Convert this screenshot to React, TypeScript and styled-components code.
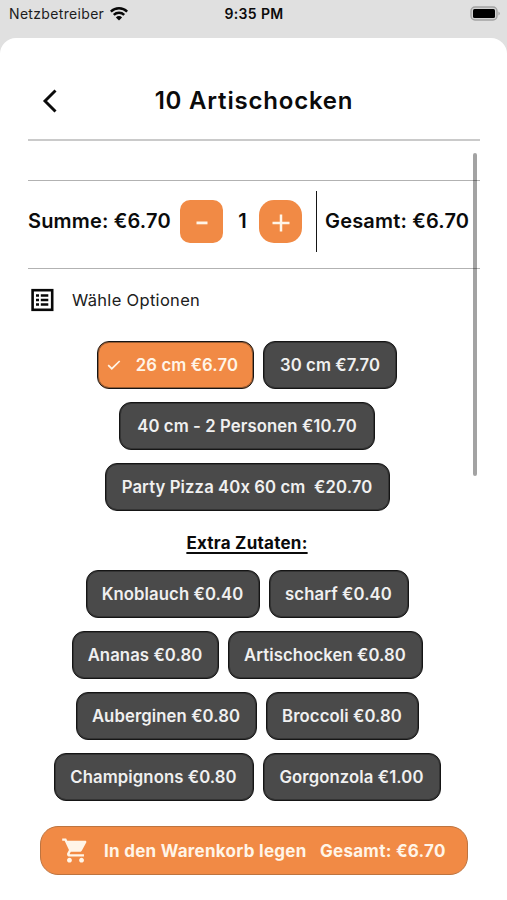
import React from "react";
import styled, { createGlobalStyle } from "styled-components";

const ORANGE = "#f18a45";

const GlobalStyle = createGlobalStyle`
  * { box-sizing: border-box; }
  body { margin: 0; background: #e0e0e0; font-family: Inter, "Liberation Sans", sans-serif; color: #0b0b0b; }
  button { font: inherit; color: inherit; margin: 0; padding: 0; border: 0; background: none; }
`;

const Screen = styled.div`
  width: 507px;
  height: 900px;
  display: flex;
  flex-direction: column;
  overflow: hidden;
  background: #e0e0e0;
`;

const StatusBar = styled.header`
  display: grid;
  grid-template-columns: 1fr auto 1fr;
  align-items: center;
  height: 38px;
  padding: 0 8px 11px 9px;
  font-size: 14px;
  line-height: 20px;
`;

const Carrier = styled.div`
  display: flex;
  align-items: center;
  gap: 6px;
  letter-spacing: 0.33px;
  color: #1c1c1c;
`;

const Clock = styled.div`
  font-weight: 600;
  letter-spacing: 0.35px;
`;

const Battery = styled.div`
  justify-self: end;
  display: flex;
  margin-right: -2px;
`;

const Sheet = styled.main`
  flex: 1;
  display: flex;
  flex-direction: column;
  background: #fff;
  border-radius: 16px 16px 0 0;
  padding: 0 27px 0 28px;
`;

const TitleBar = styled.div`
  display: grid;
  grid-template-columns: 44px 1fr 44px;
  align-items: center;
  height: 101px;
  padding-top: 25px;
`;

const BackButton = styled.button`
  display: flex;
  justify-content: center;
`;

const Title = styled.h1`
  margin: 0;
  font-size: 24px;
  line-height: 32px;
  font-weight: 600;
  letter-spacing: 0.8px;
  text-align: center;
`;

const Body = styled.section`
  position: relative;
  flex: none;
  height: 672px;
  border-top: 2px solid #cacaca;
`;

const ScrollThumb = styled.div`
  position: absolute;
  top: 12px;
  right: 3.5px;
  width: 4px;
  height: 323px;
  border-radius: 2px;
  background: rgba(0, 0, 0, 0.36);
`;

const SummaryRow = styled.div`
  display: flex;
  align-items: center;
  height: 89px;
  margin-top: 39px;
  padding-bottom: 7px;
  border: solid #b2b2b2;
  border-width: 1px 0;
  font-size: 20px;
  line-height: 28px;
  font-weight: 600;
  white-space: nowrap;
`;

const Sum = styled.span`
  width: 152px;
  letter-spacing: 0.18px;
`;

const StepButton = styled.button<{ $radius: number }>`
  display: flex;
  align-items: center;
  justify-content: center;
  width: 43px;
  height: 43px;
  padding-top: 4px;
  border-radius: ${(p) => p.$radius}px;
  background: ${ORANGE};
`;

const Quantity = styled.span`
  width: 36px;
  padding-left: 3px;
  text-align: center;
`;

const Divider = styled.span`
  width: 1px;
  height: 61px;
  margin: 0 8px 0 14px;
  background: #151515;
`;

const Total = styled.span`
  letter-spacing: 0.18px;
`;

const OptionsHeading = styled.h2`
  display: flex;
  align-items: center;
  gap: 16px;
  margin: 0 0 11px;
  height: 61px;
  font-size: 16.5px;
  font-weight: 400;
  letter-spacing: 0.31px;
  color: #202020;
`;

const ChipGroup = styled.div`
  display: flex;
  flex-direction: column;
  gap: 13px;
  width: 438px;
`;

const ChipRow = styled.div`
  display: flex;
  justify-content: center;
  gap: 9px;
`;

const Chip = styled.button<{ $width: number; $selected?: boolean }>`
  display: flex;
  align-items: center;
  justify-content: ${(p) => (p.$selected ? "space-between" : "center")};
  width: ${(p) => p.$width}px;
  height: 48px;
  padding: ${(p) => (p.$selected ? "0 15px 0 9px" : "0")};
  border: 1px solid #151515;
  border-radius: 12px;
  box-shadow: inset 0 0 0 1px rgba(20, 20, 20, 0.4);
  background: ${(p) => (p.$selected ? ORANGE : "#4a4a4a")};
  color: ${(p) => (p.$selected ? "#fff5e8" : "#f0f0f0")};
  font-size: 16.7px;
  font-weight: 600;
  letter-spacing: 0.1px;
  white-space: pre;
`;

const ExtrasHeading = styled.h3`
  width: 438px;
  height: 59px;
  margin: 0;
  padding-top: 20px;
  font-size: 17px;
  line-height: 25px;
  font-weight: 700;
  letter-spacing: 0.25px;
  text-align: center;
  text-decoration: underline;
  text-decoration-thickness: 1.5px;
  text-underline-offset: 3px;
`;

const CartButton = styled.button`
  display: flex;
  align-items: center;
  flex: none;
  width: 428px;
  height: 49px;
  margin: 15px 0 0 12px;
  padding: 0 20px;
  border: 1px solid #bd7440;
  border-radius: 18px;
  background: ${ORANGE};
  color: #fff5e8;
  font-size: 17px;
  font-weight: 700;
  letter-spacing: 0.27px;
  white-space: nowrap;
`;

const CartLabel = styled.span`
  width: 216px;
  margin-left: 14px;
  text-align: left;
`;

const CartTotal = styled.span``;

const SIZES = [
  [
    { label: "26 cm €6.70", width: 157, selected: true },
    { label: "30 cm €7.70", width: 134 },
  ],
  [{ label: "40 cm - 2 Personen €10.70", width: 256 }],
  [{ label: "Party Pizza 40x 60 cm  €20.70", width: 285 }],
];

const EXTRAS = [
  [
    { label: "Knoblauch €0.40", width: 174 },
    { label: "scharf €0.40", width: 140 },
  ],
  [
    { label: "Ananas €0.80", width: 147 },
    { label: "Artischocken €0.80", width: 195 },
  ],
  [
    { label: "Auberginen €0.80", width: 181 },
    { label: "Broccoli €0.80", width: 153 },
  ],
  [
    { label: "Champignons €0.80", width: 200 },
    { label: "Gorgonzola €1.00", width: 178 },
  ],
];

type ChipData = { label: string; width: number; selected?: boolean };

function Chips({ rows }: { rows: ChipData[][] }) {
  return (
    <ChipGroup>
      {rows.map((row, i) => (
        <ChipRow key={i}>
          {row.map((chip) => (
            <Chip key={chip.label} $width={chip.width} $selected={chip.selected}>
              {chip.selected && (
                <svg width="14" height="12" viewBox="0 0 14 12" fill="none" stroke="currentColor" strokeWidth="1.7">
                  <path d="M1.200 6.200 4.800 9.700 12.700 2" />
                </svg>
              )}
              <span>{chip.label}</span>
            </Chip>
          ))}
        </ChipRow>
      ))}
    </ChipGroup>
  );
}

export default function App() {
  return (
    <Screen>
      <GlobalStyle />
      <StatusBar>
        <Carrier>
          Netzbetreiber
          <svg width="18" height="14" viewBox="0 0 18 14" fill="none" stroke="#080808" strokeWidth="2.5">
            <path d="M.8 4.600a11.800 11.800 0 0 1 16.400 0" />
            <path d="M3.800 7.900a7.500 7.500 0 0 1 10.400 0" />
            <path d="M9 13.500 5.900 10.400a4.400 4.400 0 0 1 6.200 0Z" fill="#080808" stroke="none" />
          </svg>
        </Carrier>
        <Clock>9:35 PM</Clock>
        <Battery>
          <svg width="31" height="15" viewBox="0 0 31 15">
            <rect x="1" y="1" width="26" height="13" rx="4" fill="#d2d2d2" stroke="#a2a2a2" strokeWidth="1.4" />
            <rect x="3" y="3" width="22" height="9" rx="1.5" fill="#000" />
            <path d="M28.5 5.500q2.500 2 0 4Z" fill="#999" />
          </svg>
        </Battery>
      </StatusBar>
      <Sheet>
        <TitleBar>
          <BackButton aria-label="Zurück">
            <svg width="16" height="26" viewBox="0 0 16 26" fill="none" stroke="#0b0b0b" strokeWidth="2.9">
              <path d="M13.500 2.500 3 13 13.500 23.500" />
            </svg>
          </BackButton>
          <Title>10 Artischocken</Title>
        </TitleBar>
        <Body>
          <SummaryRow>
            <Sum>Summe: €6.70</Sum>
            <StepButton $radius={10} aria-label="Weniger">
              <svg width="12" height="4" viewBox="0 0 12 4">
                <rect x="0.5" y="0.5" width="11" height="2.8" fill="#fff5e8" />
              </svg>
            </StepButton>
            <Quantity>1</Quantity>
            <StepButton $radius={15} aria-label="Mehr">
              <svg width="18" height="18" viewBox="0 0 18 18" stroke="#fff5e8" strokeWidth="2.5">
                <path d="M.5 9h17M9 .5v17" />
              </svg>
            </StepButton>
            <Divider />
            <Total>Gesamt: €6.70</Total>
          </SummaryRow>
          <OptionsHeading>
            <svg width="28" height="28" viewBox="0 0 28 28" fill="none" stroke="#080808">
              <rect x="4.600" y="4.200" width="19.600" height="19.600" strokeWidth="2.6" />
              <path d="M8 9.500h3M8 14h3M8 18.500h3M12.800 9.500h7.500M12.800 14h7.500M12.800 18.500h7.500" strokeWidth="2.3" />
            </svg>
            Wähle Optionen
          </OptionsHeading>
          <Chips rows={SIZES} />
          <ExtrasHeading>Extra Zutaten:</ExtrasHeading>
          <Chips rows={EXTRAS} />
          <ScrollThumb />
        </Body>
        <CartButton>
          <svg width="29" height="29" viewBox="0 0 24 24" fill="currentColor">
            <path d="M7 18c-1.100 0-1.990.9-1.990 2S5.900 22 7 22s2-.9 2-2-.9-2-2-2zM1 2v2h2l3.600 7.590-1.350 2.450c-.16.28-.25.61-.25.960 0 1.100.9 2 2 2h12v-2H7.420c-.14 0-.25-.11-.25-.25l.03-.12.900-1.630h7.450c.75 0 1.410-.41 1.750-1.030l3.580-6.490c.08-.14.120-.31.120-.48 0-.55-.45-1-1-1H5.210l-.94-2H1zm16 16c-1.100 0-1.990.9-1.990 2s.89 2 1.990 2 2-.9 2-2-.9-2-2-2z" />
          </svg>
          <CartLabel>In den Warenkorb legen</CartLabel>
          <CartTotal>Gesamt: €6.70</CartTotal>
        </CartButton>
      </Sheet>
    </Screen>
  );
}
